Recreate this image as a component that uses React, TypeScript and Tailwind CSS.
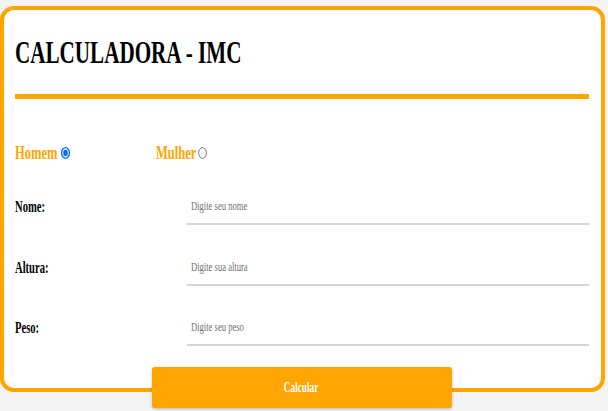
import React from "react";

const serif = { fontFamily: '"Liberation Serif", "Times New Roman", serif' };

function Radio({ checked }: { checked: boolean }) {
  return (
    <svg width="9" height="12" viewBox="0 0 9 12" className="shrink-0">
      {checked ? (
        <>
          <ellipse cx="4.5" cy="6" rx="3.9" ry="5.3" fill="none" stroke="#0a6cff" strokeWidth="1.3" />
          <ellipse cx="4.5" cy="6" rx="2.3" ry="3.3" fill="#0a6cff" />
        </>
      ) : (
        <ellipse cx="4.5" cy="6" rx="3.9" ry="5.3" fill="none" stroke="#7a7a7a" strokeWidth="1" />
      )}
    </svg>
  );
}

function Field({ label, placeholder, top }: { label: string; placeholder: string; top: string }) {
  return (
    <div className={`flex h-[36px] items-center ${top}`}>
      <div className="w-[172px] shrink-0">
        <span className="inline-block origin-left scale-x-[0.66] whitespace-nowrap text-[16px] font-bold leading-[20px] text-black">
          {label}
        </span>
      </div>
      <div className="h-full flex-1 overflow-hidden border-b-2 border-[#d6d6d6]">
        <input
          type="text"
          placeholder={placeholder}
          className="h-full w-[152%] origin-left scale-x-[0.66] bg-transparent pl-[6px] text-[13px] text-black outline-none placeholder:text-[#6f6f6f]"
          style={serif}
        />
      </div>
    </div>
  );
}

export default function App() {
  return (
    <div className="min-h-screen bg-[#f4f4f4] pt-[6px]" style={serif}>
      <div className="box-border h-[386px] w-[605px] rounded-[14px] border-4 border-[#ffa500] bg-white pl-[11px] pr-[12px] pt-[26px]">
        <h1 className="m-0 h-[32px] leading-[32px]">
          <span className="inline-block origin-left scale-x-[0.66] whitespace-nowrap text-[32px] font-bold leading-[32px] text-black">
            CALCULADORA - IMC
          </span>
        </h1>
        <div className="mt-[26px] h-[5px] bg-[#ffa500]" />

        <div className="mt-[42px] flex h-[24px] items-center">
          <div className="flex w-[141px] items-center">
            <div className="w-[46px]">
              <span className="inline-block origin-left scale-x-[0.66] whitespace-nowrap text-[19px] font-bold leading-[24px] text-[#ffa500]">
                Homem
              </span>
            </div>
            <Radio checked />
          </div>
          <div className="flex items-center">
            <div className="w-[42px]">
              <span className="inline-block origin-left scale-x-[0.66] whitespace-nowrap text-[19px] font-bold leading-[24px] text-[#ffa500]">
                Mulher
              </span>
            </div>
            <Radio checked={false} />
          </div>
        </div>

        <Field label="Nome:" placeholder="Digite seu nome" top="mt-[24px]" />
        <Field label="Altura:" placeholder="Digite sua altura" top="mt-[25px]" />
        <Field label="Peso:" placeholder="Digite seu peso" top="mt-[24px]" />

        <div className="mt-[21px] flex justify-center pr-[1px]">
          <button
            type="button"
            className="flex h-[41px] w-[300px] items-center justify-center rounded-[3px] bg-[#ffa500] shadow-[0_1px_3px_rgba(0,0,0,0.25)]"
          >
            <span className="inline-block scale-x-[0.66] whitespace-nowrap text-[14px] font-bold text-white" style={serif}>
              Calcular
            </span>
          </button>
        </div>
      </div>
    </div>
  );
}
